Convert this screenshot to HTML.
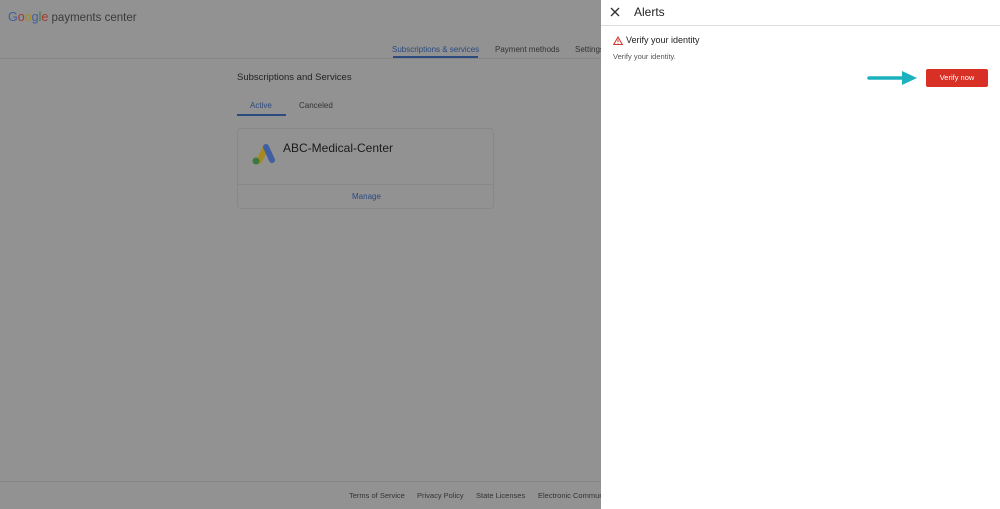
<!DOCTYPE html>
<html><head><style>
*{margin:0;padding:0;box-sizing:border-box}
body{width:1000px;height:509px;overflow:hidden;background:#929292;font-family:"Liberation Sans",sans-serif;position:relative;color:#222}
.a{position:absolute;white-space:nowrap}
</style></head><body>
<div class="a" style="left:8px;top:10px;font-size:11.5px;color:#3a3a3a"><span style="font-size:12.5px"><span style="color:#3f5fa0">G</span><span style="color:#a33a30">o</span><span style="color:#a68a20">o</span><span style="color:#3f5fa0">g</span><span style="color:#3a7a40">l</span><span style="color:#a33a30">e</span></span> payments center</div>
<div class="a" style="left:0;top:58px;width:601px;height:1px;background:#868686"></div>
<div class="a" style="left:392px;top:45px;font-size:8px;color:#2a4a80">Subscriptions &amp; services</div>
<div class="a" style="left:393px;top:56px;width:85px;height:2px;background:#2a4a80"></div>
<div class="a" style="left:495px;top:45px;font-size:8px;color:#333">Payment methods</div>
<div class="a" style="left:575px;top:45px;font-size:8px;color:#333">Settings</div>
<div class="a" style="left:237px;top:72px;font-size:9.5px;color:#222">Subscriptions and Services</div>
<div class="a" style="left:250px;top:101px;font-size:8px;color:#2a4a80">Active</div>
<div class="a" style="left:237px;top:114px;width:49px;height:2px;background:#2a4a80"></div>
<div class="a" style="left:299px;top:101px;font-size:8px;color:#333">Canceled</div>
<div class="a" style="left:237px;top:128px;width:257px;height:81px;border:1px solid #888;border-radius:4px"></div>
<div class="a" style="left:238px;top:184px;width:255px;height:1px;background:#888"></div>
<svg class="a" style="left:251px;top:142px" width="25" height="23"><line x1="8" y1="19" x2="15" y2="5" stroke="#a68a20" stroke-width="6" stroke-linecap="round"/><line x1="15" y1="5" x2="21" y2="18" stroke="#3f5fa0" stroke-width="6" stroke-linecap="round"/><circle cx="5" cy="19" r="3.5" fill="#3a7a40"/></svg>
<div class="a" style="left:283px;top:141px;font-size:12px;color:#1a1a1a">ABC-Medical-Center</div>
<div class="a" style="left:352px;top:192px;font-size:8px;color:#2a4a80">Manage</div>
<div class="a" style="left:0;top:481px;width:601px;height:1px;background:#868686"></div>
<div class="a" style="left:349px;top:491px;font-size:7.5px;color:#333">Terms of Service</div>
<div class="a" style="left:417px;top:491px;font-size:7.5px;color:#333">Privacy Policy</div>
<div class="a" style="left:476px;top:491px;font-size:7.5px;color:#333">State Licenses</div>
<div class="a" style="left:538px;top:491px;font-size:7.5px;color:#333">Electronic Communications</div>
<div class="a" style="left:601px;top:0;width:399px;height:509px;background:#fff;overflow:hidden">
<svg class="a" style="left:9px;top:7px" width="10" height="10"><path d="M1 1L9 9M9 1L1 9" stroke="#333" stroke-width="1.4"/></svg>
<div class="a" style="left:33px;top:5px;font-size:12px;color:#222">Alerts</div>
<div class="a" style="left:0;top:25px;width:399px;height:1px;background:#ddd"></div>
<svg class="a" style="left:12px;top:36px" width="10" height="9"><path d="M5 1L9.3 8.5H0.7Z" fill="none" stroke="#d23a2e" stroke-width="1.1"/><path d="M5 3.5V6M5 6.8V7.5" stroke="#d23a2e" stroke-width="1"/></svg>
<div class="a" style="left:25px;top:35px;font-size:9px;color:#222">Verify your identity</div>
<div class="a" style="left:12px;top:52px;font-size:7.5px;color:#555">Verify your identity.</div>
<svg class="a" style="left:266px;top:69px" width="52" height="18"><path d="M2 9H38" stroke="#1bb2bd" stroke-width="3.5" stroke-linecap="round"/><path d="M35 2L50 9L35 16Z" fill="#1bb2bd"/></svg>
<div class="a" style="left:325px;top:69px;width:62px;height:18px;background:#d93025;border-radius:2px;color:#fff;font-size:7.5px;text-align:center;line-height:18px">Verify now</div>
</div>
</body></html>
